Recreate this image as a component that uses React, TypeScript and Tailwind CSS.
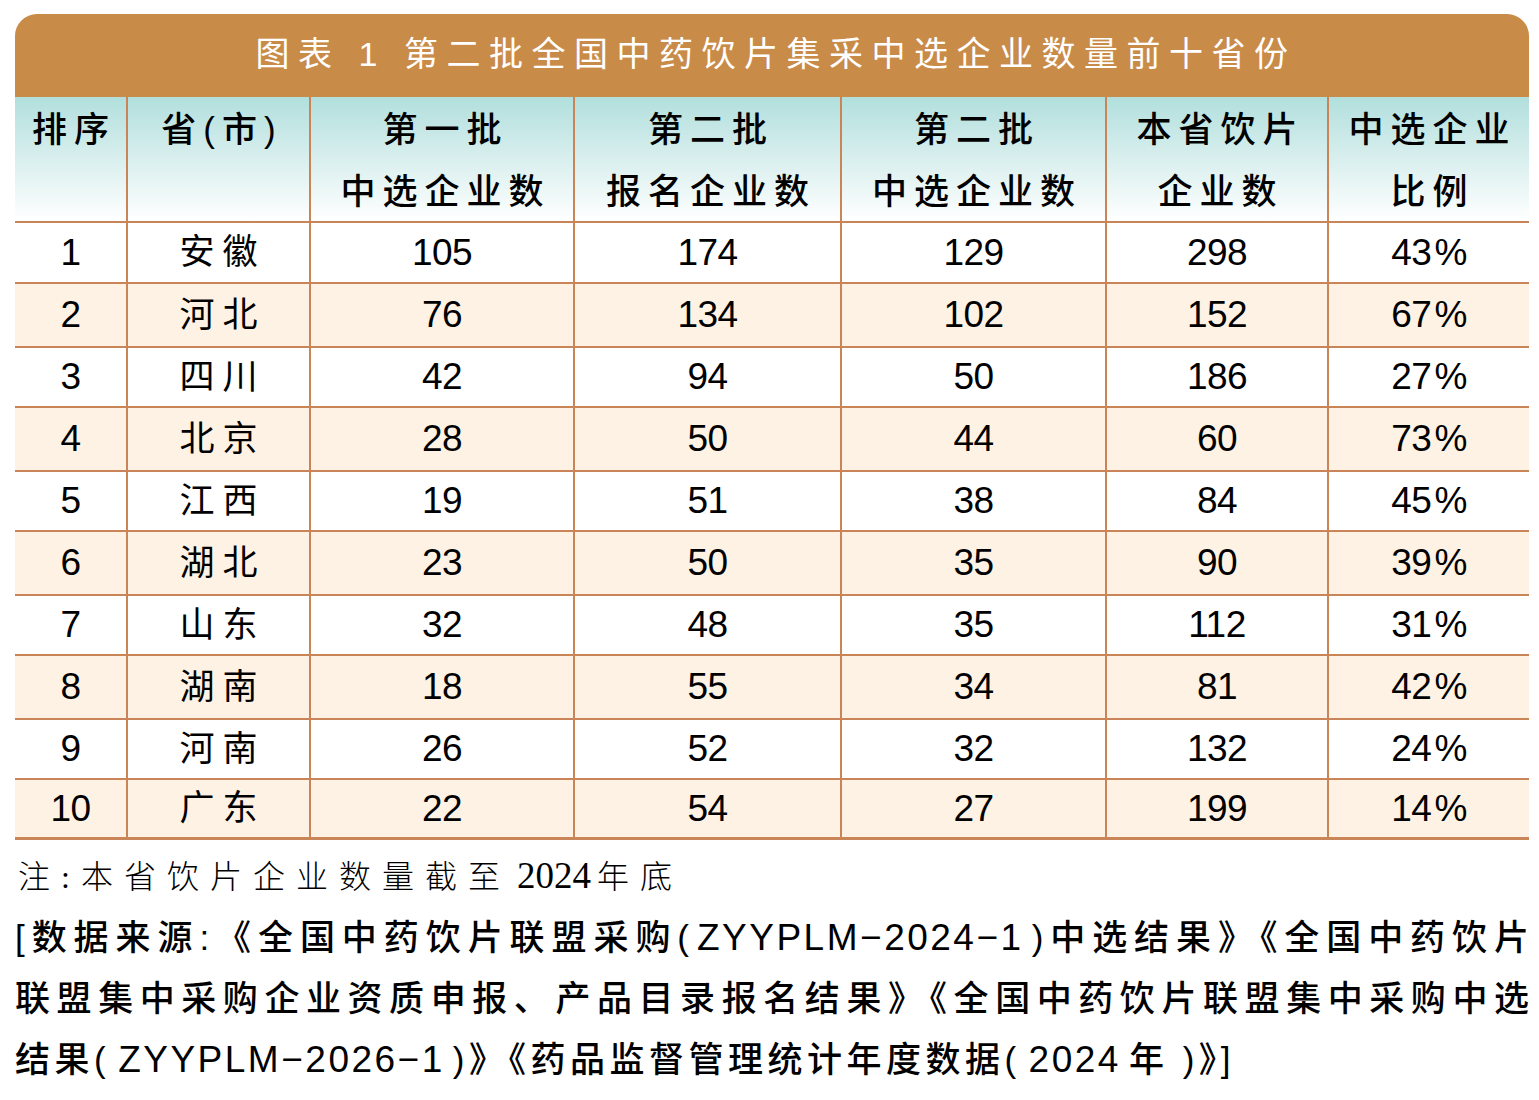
const rows = [
  ['1', '安徽', '105', '174', '129', '298', '43%'],
  ['2', '河北', '76', '134', '102', '152', '67%'],
  ['3', '四川', '42', '94', '50', '186', '27%'],
  ['4', '北京', '28', '50', '44', '60', '73%'],
  ['5', '江西', '19', '51', '38', '84', '45%'],
  ['6', '湖北', '23', '50', '35', '90', '39%'],
  ['7', '山东', '32', '48', '35', '112', '31%'],
  ['8', '湖南', '18', '55', '34', '81', '42%'],
  ['9', '河南', '26', '52', '32', '132', '24%'],
  ['10', '广东', '22', '54', '27', '199', '14%'],
];

// 行高：白行与米色行略有不同
const rowH = ['h-[61px]', 'h-[64px]', 'h-[60px]', 'h-[64px]', 'h-[60px]', 'h-[64px]', 'h-[60px]', 'h-[64px]', 'h-[60px]', 'h-[60px]'];

const headers: [string, string][] = [
  ['排序', ''],
  ['省(市)', ''],
  ['第一批', '中选企业数'],
  ['第二批', '报名企业数'],
  ['第二批', '中选企业数'],
  ['本省饮片', '企业数'],
  ['中选企业', '比例'],
];

const sans = "font-['Liberation_Sans','Noto_Sans_CJK_SC',sans-serif]";

function Num({ v }: { v: string }) {
  if (v.endsWith('%')) {
    return (
      <span>
        {v.slice(0, -1)}
        <span className="pl-[3px]">%</span>
      </span>
    );
  }
  return <span>{v}</span>;
}

function Latin({ children }: { children: string }) {
  return <span className="px-[8px] text-[37px] tracking-[2.5px]">{children}</span>;
}

export default function App() {
  return (
    <div className={`min-h-[1100px] w-[1539px] bg-white pt-[14px] text-black ${sans}`}>
      <div className="ml-[15px] w-[1514px]">
        {/* 标题 */}
        <div className="flex h-[83px] items-center justify-center rounded-t-[22px] bg-[#c98b48] pb-[2px] pl-[8px] text-[34px] tracking-[8.5px] text-white">
          图表 1 第二批全国中药饮片集采中选企业数量前十省份
        </div>

        {/* 表格 */}
        <div className="grid grid-cols-[111px_183px_264px_267px_265px_222px_202px]">
          {headers.map(([a, b], i) => (
            <div
              key={i}
              className={`flex h-[126px] flex-col items-center border-b-2 border-[#c98458] bg-gradient-to-b from-[#b1dfdd] to-white pt-[2px] text-[35px] font-medium leading-[62px] tracking-[7px] ${i > 0 ? 'border-l-2' : ''}`}
            >
              <span className="pl-[7px]">{a}</span>
              <span className="pl-[7px]">{b}</span>
            </div>
          ))}
          {rows.map((r, ri) =>
            r.map((c, ci) => (
              <div
                key={`${ri}-${ci}`}
                className={`flex ${rowH[ri]} items-center justify-center border-[#c98458] ${ri === rows.length - 1 ? 'border-b-[3px]' : 'border-b-2'} ${ci > 0 ? 'border-l-2' : ''} ${ri % 2 === 1 ? 'bg-[#fef2e4]' : 'bg-white'} ${ci === 1 ? 'pl-[8px] text-[35px] tracking-[8px]' : 'text-[37px] tracking-[-0.5px]'}`}
              >
                {ci === 1 ? c : <Num v={c} />}
              </div>
            ))
          )}
        </div>

        {/* 注 */}
        <div className="mt-[16px] pl-[3px] font-['Liberation_Serif','Noto_Sans_CJK_SC',serif] text-[32px] font-light leading-[40px] tracking-[11px]">
          注:本省饮片企业数量截至<span className="px-[6px] font-['Liberation_Serif'] text-[37px] tracking-normal">2024</span>年底
        </div>

        {/* 数据来源 */}
        <div className="mt-[10px] text-[35px] font-medium leading-[61px]">
          <div className="text-justify [text-align-last:justify]">
            [数据来源:《全国中药饮片联盟采购(<Latin>ZYYPLM−2024−1</Latin>)中选结果》《全国中药饮片
          </div>
          <div className="text-justify [text-align-last:justify]">
            联盟集中采购企业资质申报、产品目录报名结果》《全国中药饮片联盟集中采购中选
          </div>
          <div className="tracking-[4.5px]">
            结果(<Latin>ZYYPLM−2026−1</Latin>)》《药品监督管理统计年度数据(<Latin>2024</Latin>年 )》]
          </div>
        </div>
      </div>
    </div>
  );
}
